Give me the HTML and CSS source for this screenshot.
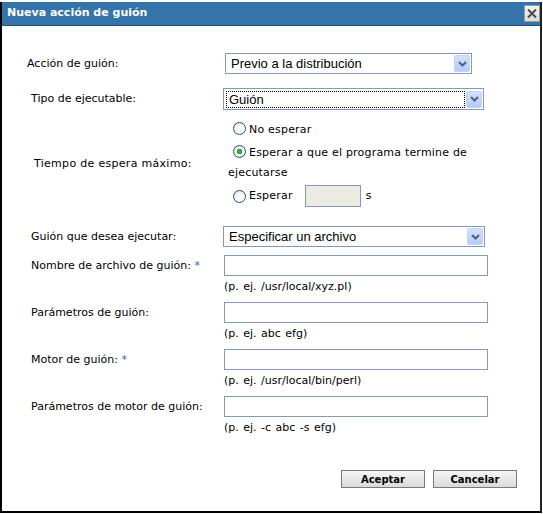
FILE: index.html
```html
<!DOCTYPE html>
<html lang="es">
<head>
	<meta charset="UTF-8">
	<title>Nueva acción de guión</title>
	<link rel="stylesheet" href="styles.css">
</head>
<body>
	<div class="dialog">
		<div class="titlebar">
			<span class="title">Nueva acción de guión</span>
			<span class="close">
				<svg width="14" height="15" viewBox="0 0 14 15"><path d="M3 3.5 L11 11.5 M11 3.5 L3 11.5" stroke="#4a4a4a" stroke-width="2"/></svg>
			</span>
		</div>

		<div class="form">
			<!-- accion -->
			<div class="row">
				<label class="lbl lbl-first">Acción de guión:</label>
				<div class="select select-a">
					<span class="select-text">Previo a la distribución</span>
					<span class="arrow"><svg width="9" height="6" viewBox="0 0 9 6"><path d="M1 1 L4.5 4.5 L8 1" fill="none" stroke="#4d6185" stroke-width="2"/></svg></span>
				</div>
			</div>

			<div class="row row-tipo">
				<label class="lbl">Tipo de ejecutable:</label>
				<div class="select select-b">
					<span class="select-text focus">Guión</span>
					<span class="arrow"><svg width="9" height="6" viewBox="0 0 9 6"><path d="M1 1 L4.5 4.5 L8 1" fill="none" stroke="#4d6185" stroke-width="2"/></svg></span>
				</div>
			</div>

			<div class="row row-espera">
				<label class="lbl lbl-espera">Tiempo de espera máximo:</label>
				<div class="radios">
					<div class="opt"><span class="radio"></span>No esperar</div>
					<div class="opt opt-2"><span class="radio checked"></span>Esperar a que el programa termine de ejecutarse</div>
					<div class="opt opt-3"><span class="radio"></span>Esperar <span class="secs"></span> <span class="unit">s</span></div>
				</div>
			</div>

			<div class="row row-guion">
				<label class="lbl">Guión que desea ejecutar:</label>
				<div class="select select-c">
					<span class="select-text">Especificar un archivo</span>
					<span class="arrow"><svg width="9" height="6" viewBox="0 0 9 6"><path d="M1 1 L4.5 4.5 L8 1" fill="none" stroke="#4d6185" stroke-width="2"/></svg></span>
				</div>
			</div>

			<div class="field">
				<label class="lbl">Nombre de archivo de guión: <span class="req">*</span></label>
				<div class="input"></div>
				<div class="hint">(p. ej. /usr/local/xyz.pl)</div>
			</div>

			<div class="field">
				<label class="lbl">Parámetros de guión:</label>
				<div class="input"></div>
				<div class="hint">(p. ej. abc efg)</div>
			</div>

			<div class="field">
				<label class="lbl">Motor de guión: <span class="req">*</span></label>
				<div class="input"></div>
				<div class="hint">(p. ej. /usr/local/bin/perl)</div>
			</div>

			<div class="field">
				<label class="lbl">Parámetros de motor de guión:</label>
				<div class="input"></div>
				<div class="hint">(p. ej. -c abc -s efg)</div>
			</div>
		</div>

		<div class="buttons">
			<button class="btn">Aceptar</button>
			<button class="btn">Cancelar</button>
		</div>
	</div>
</body>
</html>
```

FILE: styles.css
```css
* {
	box-sizing: border-box;
}
body {
	margin: 0;
	background: #fff;
	font-family: "DejaVu Sans", sans-serif;
	font-size: 11px;
	color: #000;
}
.dialog {
	width: 542px;
	height: 511px;
	margin-top: 2px;
	border-left: 2px solid #000;
	border-right: 2px solid #222;
	border-bottom: 2px solid #000;
	background: #fff;
}
.titlebar {
	display: flex;
	justify-content: space-between;
	align-items: flex-start;
	height: 24px;
	background: #3574aa;
	border-bottom: 1px solid #24507a;
}
.title {
	color: #fff;
	font-weight: bold;
	font-size: 11px;
	line-height: 22px;
	padding-left: 5px;
}
.close {
	display: flex;
	align-items: center;
	justify-content: center;
	width: 16px;
	height: 17px;
	margin-top: 3px;
	background: linear-gradient(#f4f4f0, #dcdcd6);
	border: 1px solid #9a9a9a;
}

/* form rows */
.form {
	padding: 27px 0 0 29px;
}
.row {
	display: grid;
	grid-template-columns: 193px 270px;
	align-items: center;
}
.lbl {
	line-height: 14px;
	white-space: nowrap;
}
.lbl-first {
	margin-left: -4px;
}
.lbl-espera {
	margin-left: 3px;
	letter-spacing: 0.3px;
}
.row-tipo {
	margin-top: 14px;
}
.row-espera {
	margin-top: 10px;
}
.row-guion {
	margin-top: 19px;
}

.select {
	display: flex;
	align-items: center;
	justify-content: space-between;
	height: 21px;
	border: 1px solid #7f9db9;
	background: #fff;
	padding: 0 1px 0 2px;
	font-family: "Liberation Sans", sans-serif;
	font-size: 13px;
}
.select-a {
	width: 247px;
	margin-left: 1px;
}
.select-b {
	width: 261px;
	height: 22px;
	margin-left: -1px;
}
.select-c {
	width: 262px;
	margin-left: -1px;
}
.select-text {
	padding-left: 3px;
}
.select-text.focus {
	flex: 1;
	height: 17px;
	line-height: 15px;
	border: 1px dotted #000;
	padding-left: 2px;
	margin-right: 1px;
}
.arrow {
	display: flex;
	align-items: center;
	justify-content: center;
	width: 16px;
	height: 17px;
	background: linear-gradient(#d3e0fd, #b7cbf6);
	border: 1px solid #c3d3f7;
	border-radius: 2px;
}

/* radios */
.radios {
	width: 255px;
	margin-left: 4px;
	line-height: 20px;
	letter-spacing: 0.2px;
}
.opt-2 {
	margin-top: 3px;
}
.opt-3 {
	display: flex;
	align-items: center;
	height: 22px;
	margin-top: 2px;
}
.radio {
	display: inline-block;
	width: 13px;
	height: 13px;
	margin: 0 3px 0 5px;
	vertical-align: -2px;
	border: 1px solid #1c5180;
	border-radius: 50%;
	background: radial-gradient(circle at 65% 65%, #fff 30%, #dcdcd4 100%);
}
.radio.checked {
	background: radial-gradient(circle, #3ec23e 0, #1c9a1c 2.5px, #fff 3px, #fff 30%, #dcdcd4 100%);
}
.secs {
	display: inline-block;
	width: 56px;
	height: 22px;
	margin-left: 12px;
	background: #ebebe4;
	border: 1px solid #7f9db9;
}
.unit {
	margin-left: 5px;
}

/* text fields */
.field {
	display: grid;
	grid-template-columns: 193px 264px;
	align-items: center;
	margin-top: 8px;
}
.input {
	height: 21px;
	border: 1px solid #7f9db9;
	background: #fff;
}
.hint {
	grid-column: 2;
	margin-top: 4px;
	line-height: 14px;
	word-spacing: 1px;
}
.req {
	color: #2f64c4;
}

.buttons {
	display: flex;
	justify-content: flex-end;
	gap: 8px;
	margin-top: 35px;
	padding-right: 23px;
}
.btn {
	width: 84px;
	height: 18px;
	padding: 0;
	border: 1px solid #7b7b7b;
	background: linear-gradient(#f6f6f6, #dadada);
	font-family: "DejaVu Sans", sans-serif;
	font-weight: bold;
	font-size: 10px;
	color: #000;
}
```
